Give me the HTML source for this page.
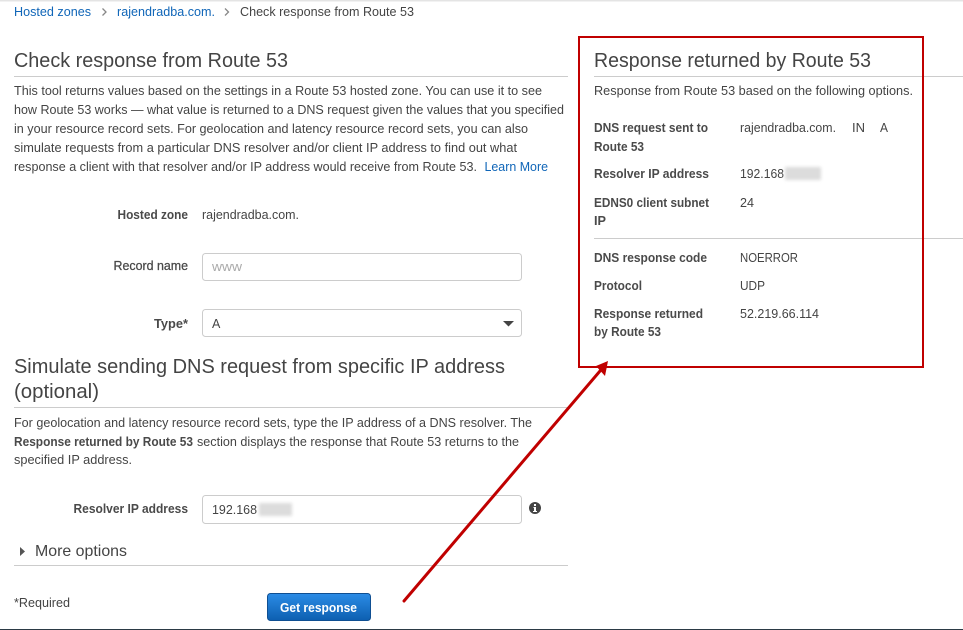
<!DOCTYPE html>
<html><head><meta charset="utf-8"><style>
html,body{margin:0;padding:0;background:#fff}
svg{display:block}
text{font-family:"Liberation Sans",sans-serif;font-size:12.5px;fill:#444}
.b{font-weight:bold;fill:#4a4a4a}
.h{font-size:20px;fill:#444}
.l{fill:#1066b8}
</style></head><body>
<svg xmlns="http://www.w3.org/2000/svg" width="963" height="630" viewBox="0 0 963 630">
<defs>
<filter id="bl" x="-30%" y="-50%" width="160%" height="200%"><feGaussianBlur stdDeviation="1.5"/></filter>
<linearGradient id="btn" x1="0" y1="0" x2="0" y2="1"><stop offset="0" stop-color="#2b8ce6"/><stop offset="1" stop-color="#0d5fb0"/></linearGradient>
</defs>
<rect x="0" y="0" width="963" height="1.5" fill="#e4e4e4"/>
<rect x="0" y="629" width="963" height="1" fill="#2b3a45"/>

<text class="l" x="14" y="16" textLength="77" lengthAdjust="spacingAndGlyphs">Hosted zones</text>
<path d="M102.500 8.500l3.500 3.500-3.500 3.500" fill="none" stroke="#888" stroke-width="1.300"/>
<text class="l" x="117" y="16" textLength="98" lengthAdjust="spacingAndGlyphs">rajendradba.com.</text>
<path d="M225 8.500l3.500 3.500-3.500 3.500" fill="none" stroke="#888" stroke-width="1.300"/>
<text x="240" y="16" textLength="174" lengthAdjust="spacingAndGlyphs">Check response from Route 53</text>

<text class="h" x="14" y="67" textLength="274" lengthAdjust="spacingAndGlyphs">Check response from Route 53</text>
<rect x="14" y="76" width="554" height="1" fill="#ccc"/>
<text x="14" y="95" textLength="528" lengthAdjust="spacingAndGlyphs">This tool returns values based on the settings in a Route 53 hosted zone. You can use it to see</text>
<text x="14" y="114" textLength="550" lengthAdjust="spacingAndGlyphs">how Route 53 works — what value is returned to a DNS request given the values that you specified</text>
<text x="14" y="133" textLength="514" lengthAdjust="spacingAndGlyphs">in your resource record sets. For geolocation and latency resource record sets, you can also</text>
<text x="14" y="152" textLength="503" lengthAdjust="spacingAndGlyphs">simulate requests from a particular DNS resolver and/or client IP address to find out what</text>
<text x="14" y="171" textLength="463" lengthAdjust="spacingAndGlyphs">response a client with that resolver and/or IP address would receive from Route 53.</text>
<text class="l" x="484.500" y="171" textLength="63.500" lengthAdjust="spacingAndGlyphs">Learn More</text>

<text class="b" x="117.500" y="219" textLength="70.500" lengthAdjust="spacingAndGlyphs">Hosted zone</text>
<text x="202" y="219" textLength="97" lengthAdjust="spacingAndGlyphs">rajendradba.com.</text>

<text class="b" x="113.500" y="270" textLength="74.500" lengthAdjust="spacingAndGlyphs" style="font-weight:normal;stroke:#444;stroke-width:.25">Record name</text>
<rect x="202.500" y="253.500" width="319" height="27" rx="3" fill="#fff" stroke="#ccc"/>
<text x="212" y="271" textLength="30" lengthAdjust="spacingAndGlyphs" style="fill:#aaa">www</text>

<text class="b" x="154" y="328" textLength="34" lengthAdjust="spacingAndGlyphs">Type*</text>
<rect x="202.500" y="309.500" width="319" height="27" rx="3" fill="#fff" stroke="#ccc"/>
<text x="212" y="328">A</text>
<path d="M503 321h11l-5.500 5.500z" fill="#444"/>

<text class="h" x="14" y="373" textLength="491" lengthAdjust="spacingAndGlyphs">Simulate sending DNS request from specific IP address</text>
<text class="h" x="14" y="398" textLength="85" lengthAdjust="spacingAndGlyphs">(optional)</text>
<rect x="14" y="407" width="554" height="1" fill="#ccc"/>

<text x="14" y="427" textLength="518" lengthAdjust="spacingAndGlyphs">For geolocation and latency resource record sets, type the IP address of a DNS resolver. The</text>
<text class="b" x="14" y="446" textLength="179" lengthAdjust="spacingAndGlyphs">Response returned by Route 53</text>
<text x="197" y="446" textLength="322" lengthAdjust="spacingAndGlyphs">section displays the response that Route 53 returns to the</text>
<text x="14" y="464" textLength="118" lengthAdjust="spacingAndGlyphs">specified IP address.</text>

<text class="b" x="73.500" y="513" textLength="114.500" lengthAdjust="spacingAndGlyphs">Resolver IP address</text>
<rect x="202.500" y="495.500" width="319" height="28" rx="3" fill="#fff" stroke="#ccc"/>
<text x="212" y="514" textLength="45" lengthAdjust="spacingAndGlyphs">192.168</text>
<rect x="259" y="503" width="33" height="13" fill="#dcdcdc" filter="url(#bl)"/>
<circle cx="535" cy="508" r="6" fill="#444"/>
<rect x="534" y="507" width="2" height="4.500" fill="#fff"/>
<rect x="533" y="511" width="4" height="1" fill="#fff"/>
<rect x="533.500" y="507" width="2" height="1" fill="#fff"/>
<rect x="534" y="504" width="2" height="2" fill="#fff"/>

<path d="M20 547l5 4.500-5 4.500z" fill="#555"/>
<text x="35" y="556" textLength="92" lengthAdjust="spacingAndGlyphs" style="font-size:16px">More options</text>
<rect x="14" y="565" width="554" height="1" fill="#ccc"/>

<text x="14" y="607" textLength="56" lengthAdjust="spacingAndGlyphs">*Required</text>
<rect x="267.500" y="593.500" width="103" height="27" rx="3" fill="url(#btn)" stroke="#0f4f92"/>
<text class="b" x="280" y="612" textLength="77" lengthAdjust="spacingAndGlyphs" style="fill:#fff">Get response</text>

<text class="h" x="594" y="67" textLength="277" lengthAdjust="spacingAndGlyphs">Response returned by Route 53</text>
<rect x="594" y="76" width="369" height="1" fill="#ccc"/>
<text x="594" y="95" textLength="319" lengthAdjust="spacingAndGlyphs">Response from Route 53 based on the following options.</text>

<text class="b" x="594" y="132" textLength="114" lengthAdjust="spacingAndGlyphs">DNS request sent to</text>
<text class="b" x="594" y="151" textLength="50" lengthAdjust="spacingAndGlyphs">Route 53</text>
<text x="740" y="132" textLength="96" lengthAdjust="spacingAndGlyphs">rajendradba.com.</text>
<text x="852" y="132" textLength="13" lengthAdjust="spacingAndGlyphs">IN</text>
<text x="880" y="132" textLength="8" lengthAdjust="spacingAndGlyphs">A</text>

<text class="b" x="594" y="178" textLength="115" lengthAdjust="spacingAndGlyphs">Resolver IP address</text>
<text x="740" y="178" textLength="44" lengthAdjust="spacingAndGlyphs">192.168</text>
<rect x="785" y="167" width="36" height="13" fill="#dcdcdc" filter="url(#bl)"/>

<text class="b" x="594" y="207" textLength="115" lengthAdjust="spacingAndGlyphs">EDNS0 client subnet</text>
<text x="740" y="207" textLength="14" lengthAdjust="spacingAndGlyphs">24</text>
<text class="b" x="594" y="225" textLength="12" lengthAdjust="spacingAndGlyphs">IP</text>
<rect x="594" y="238" width="369" height="1" fill="#ccc"/>

<text class="b" x="594" y="262" textLength="113" lengthAdjust="spacingAndGlyphs">DNS response code</text>
<text x="740" y="262" textLength="58" lengthAdjust="spacingAndGlyphs">NOERROR</text>
<text class="b" x="594" y="290" textLength="48" lengthAdjust="spacingAndGlyphs">Protocol</text>
<text x="740" y="290" textLength="25" lengthAdjust="spacingAndGlyphs">UDP</text>
<text class="b" x="594" y="318" textLength="109" lengthAdjust="spacingAndGlyphs">Response returned</text>
<text x="740" y="318" textLength="79" lengthAdjust="spacingAndGlyphs">52.219.66.114</text>
<text class="b" x="594" y="336" textLength="67" lengthAdjust="spacingAndGlyphs">by Route 53</text>

<rect x="579" y="37" width="344" height="330" fill="none" stroke="#c00000" stroke-width="2"/>
<path d="M404 601L600 371" fill="none" stroke="#c00000" stroke-width="3" stroke-linecap="round"/>
<path d="M608 361L596 366L605 376z" fill="#c00000"/>
</svg>
</body></html>
